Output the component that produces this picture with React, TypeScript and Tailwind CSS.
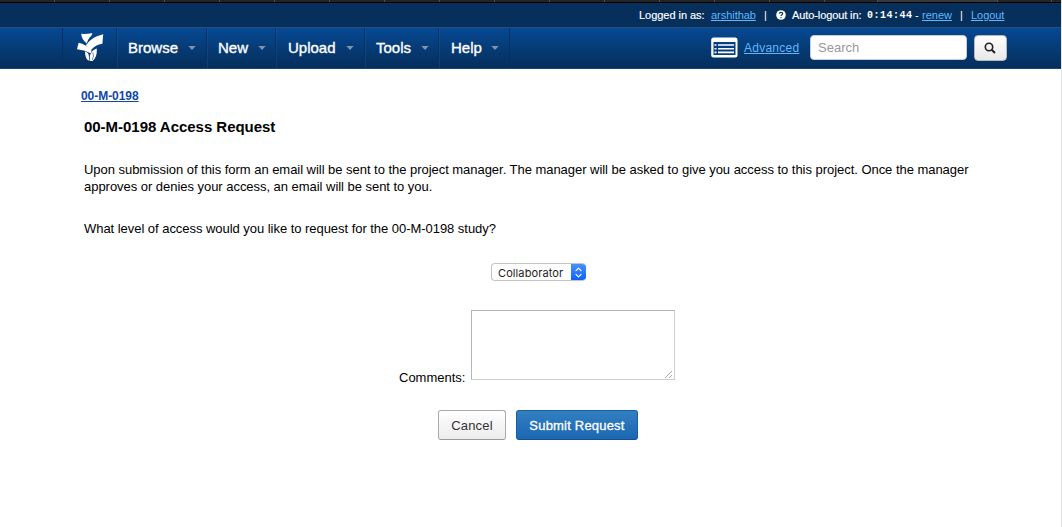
import React from "react";

const menus = [
  { label: "Browse", box: "w-[90px]", text: "w-[52px]", pad: "pl-[10px]" },
  { label: "New", box: "w-[69px]", text: "w-[32px]", pad: "pl-[10px]" },
  { label: "Upload", box: "w-[89px]", text: "w-[50px]", pad: "pl-[11px]" },
  { label: "Tools", box: "w-[74px]", text: "w-[37px]", pad: "pl-[10px]" },
  { label: "Help", box: "w-[71px]", text: "w-[32px]", pad: "pl-[11px]" },
];

function Logo() {
  return (
    <svg width="28" height="30" viewBox="0 0 28 30" fill="#fff" className="block">
      <path d="M4.2 1.8 Q10 2.2 15.4 1 L14.5 3.6 Q11.4 6 9.8 11.4 Q4.8 8 4.2 1.8Z" />
      <path d="M26.2 2.2 L25.4 11.8 Q18.5 12.8 13.8 18.2 L8.9 13.3 Q14 4.8 26.2 2.2Z" />
      <path d="M1.6 10.8 Q9 12.3 14.6 18.4 L13.6 21.2 Q7 17.6 0 17.3Z" />
      <path d="M8 19.4 Q12.3 20.6 11.9 25 L12.6 28.9 Q8 27.5 8 19.4Z" />
      <path d="M13.8 21.5 Q16 17.5 19.8 16.6 Q20.3 25.5 15.6 28.9 L13.3 28.9 Q11.9 24.5 13.8 21.5Z" />
      <path d="M15.9 20.5 Q17.4 24 15.2 28" fill="none" stroke="#0a4381" strokeWidth=".6" />
    </svg>
  );
}

function ListIcon() {
  return (
    <svg width="27" height="21" viewBox="0 0 27 21" className="block">
      <rect x=".2" y=".5" width="26.3" height="20" rx="2.5" fill="#fff" />
      <rect x="2.5" y="5" width="22" height="13" fill="#063f80" />
      <path d="M3.5 8h2M3.5 11.7h2M3.5 15.4h2M7 8h16M7 11.7h16M7 15.4h16" stroke="#fff" strokeWidth="1.6" />
    </svg>
  );
}

export default function App() {
  return (
    <div className="h-[527px] w-[1062px] overflow-hidden border-r border-[#e3e3e3] bg-white font-['Liberation_Sans',sans-serif] text-[13px] text-black">
      <div className="flex h-[3px] overflow-hidden border-b border-black bg-[#242424] pl-[54px]">
        {Array.from({ length: 14 }, (_, i) => (
          <div key={i} className="w-[55px] shrink-0 border-l border-[#505050]" />
        ))}
        <div className="w-[53px] shrink-0 border-l border-[#505050]" />
        <div className="w-[121px] shrink-0 border-r border-l border-[#505050] bg-[#383838]" />
        <div className="w-[54px] shrink-0 border-r border-[#505050]" />
      </div>
      <div className="flex h-6 bg-[#072f5c] pl-[639px] text-[11px] leading-[24px] whitespace-nowrap text-white">
        <span className="w-[72px] tracking-[-0.04px] [-webkit-text-stroke:0.15px_white]">Logged in as:</span>
        <a className="w-[53px] tracking-[-0.04px] text-[#5bb8ff] underline">arshithab</a>
        <span className="w-3">|</span>
        <svg width="10" height="10" viewBox="0 0 10 10" className="mt-[7px] mr-[6px] shrink-0">
          <circle cx="5" cy="5" r="4.8" fill="#fff" />
          <path d="M3.4 3.7Q3.5 2.4 5 2.4Q6.7 2.4 6.6 3.8Q6.6 4.5 5.8 4.9Q5 5.3 5 6M5 7v1" stroke="#072f5c" strokeWidth="1.1" fill="none" />
        </svg>
        <span className="w-[75px] tracking-[-0.1px] [-webkit-text-stroke:0.15px_white]">Auto-logout in:</span>
        <span className="w-[48px] pt-px font-['Liberation_Mono',monospace] text-[10px] font-bold tracking-[0.5px]">0:14:44</span>
        <span className="w-[7px]">-</span>
        <a className="w-[38px] text-[#5bb8ff] underline">renew</a>
        <span className="w-[11px]">|</span>
        <a className="tracking-[-0.05px] text-[#5bb8ff] underline">Logout</a>
      </div>
      <header className="flex h-[42px] border-t border-b border-t-[#254f7d] border-b-[#174776] bg-linear-to-b from-[#064994] to-[#052e5b] pl-[62px]">
        <div className="flex w-[55px] border-r border-l border-r-[#04315f] border-l-[#04315f] pt-[4px] pl-[14px]">
          <Logo />
        </div>
        {menus.map((m) => (
          <div key={m.label} className={`${m.box} ${m.pad} flex shrink-0 items-center border-r border-[#04315f] border-l border-l-[#1b62ac]/30 text-[15px] text-white [-webkit-text-stroke:0.35px_white]`}>
            <span className={`${m.text} whitespace-nowrap`}>{m.label}</span>
            <svg width="8" height="4" viewBox="0 0 8 4" className="ml-[8px] shrink-0">
              <path d="M0.3 0h7.4L4 4z" fill="#8093a8" />
            </svg>
          </div>
        ))}
        <div className="ml-[201px] flex pt-[7px]">
          <div className="pt-[2px]"><ListIcon /></div>
          <a className="ml-[6px] w-[66px] pt-[4px] text-[12px] leading-[18px] tracking-[0.25px] text-[#5bb8ff] underline">Advanced</a>
          <input placeholder="Search" className="h-[25px] w-[157px] rounded-[4px] border border-[#c9cdd2] bg-white px-[7px] text-[13px] placeholder:text-[#999]" />
          <button className="ml-[7px] flex h-[26px] w-[33px] items-center justify-center rounded-[4px] border border-[#b8b8b8] bg-linear-to-b from-white to-[#e8e8e8] pr-px">
            <svg width="12" height="12" viewBox="0 0 12 12" fill="none" stroke="#222" strokeWidth="1.6">
              <circle cx="5" cy="5" r="3.7" />
              <path d="M7.7 7.7L11 11" strokeWidth="2" />
            </svg>
          </button>
        </div>
      </header>
      <main>
        <a className="mt-[20px] ml-[81px] block w-max text-[12px] leading-[14px] font-bold tracking-[-0.05px] text-[#1048a5] underline">00-M-0198</a>
        <h1 className="mt-[14px] ml-[84px] text-[15px] leading-[20px] font-bold tracking-[-0.03px]">00-M-0198 Access Request</h1>
        <p className="mt-[24px] ml-[84px] leading-[17px] tracking-[-0.036px] whitespace-nowrap">
          Upon submission of this form an email will be sent to the project manager. The manager will be asked to give you access to this project. Once the manager<br />
          approves or denies your access, an email will be sent to you.
        </p>
        <p className="mt-[25px] ml-[84px] leading-[17px] tracking-[-0.04px]">What level of access would you like to request for the 00-M-0198 study?</p>
        <div className="mt-[26px] ml-[491px] flex h-[18px] w-[95px] overflow-hidden rounded-[4px] border border-r-0 border-[#c4c4c4] bg-white">
          <span className="w-[80px] pl-[6px] font-[Inter,sans-serif] text-[11px] leading-[18px] tracking-[0.1px] text-[#222]">Collaborator</span>
          <span className="-my-px flex w-[15px] items-center justify-center bg-linear-to-b from-[#4a94fc] to-[#075df8]">
            <svg width="7" height="11" viewBox="0 0 7 11" fill="none" stroke="#fff" strokeWidth="1.2" strokeLinecap="round" strokeLinejoin="round">
              <path d="M1 3.7L3.5 1.2L6 3.7M1 7.3L3.5 9.8L6 7.3" />
            </svg>
          </span>
        </div>
        <div className="mt-[29px] ml-[399px] flex h-[75px]">
          <label className="w-[72px] pt-[59px] leading-[17px]">Comments:</label>
          <div className="flex h-[70px] w-[204px] items-end justify-end border border-[#b5b5b5] border-r-[#cecece] border-b-[#cecece]">
            <svg width="10" height="9" viewBox="0 0 10 9" stroke="#aaa" className="block">
              <path d="M1 8L8 1M5 8L8 5" />
            </svg>
          </div>
        </div>
        <div className="mt-[25px] ml-[438px] flex gap-[10px] text-[13px] tracking-[0.2px]">
          <button className="h-[30px] w-[68px] rounded-[3px] border border-[#aaa] border-b-[#999] bg-linear-to-b from-white to-[#ececec] pt-px text-[#333]">Cancel</button>
          <button className="h-[30px] w-[122px] rounded-[3px] border border-[#1b5e9f] border-b-[#174f86] bg-linear-to-b from-[#327fc1] to-[#1b67b2] pt-px text-white [-webkit-text-stroke:0.3px_white]">Submit Request</button>
        </div>
      </main>
    </div>
  );
}
